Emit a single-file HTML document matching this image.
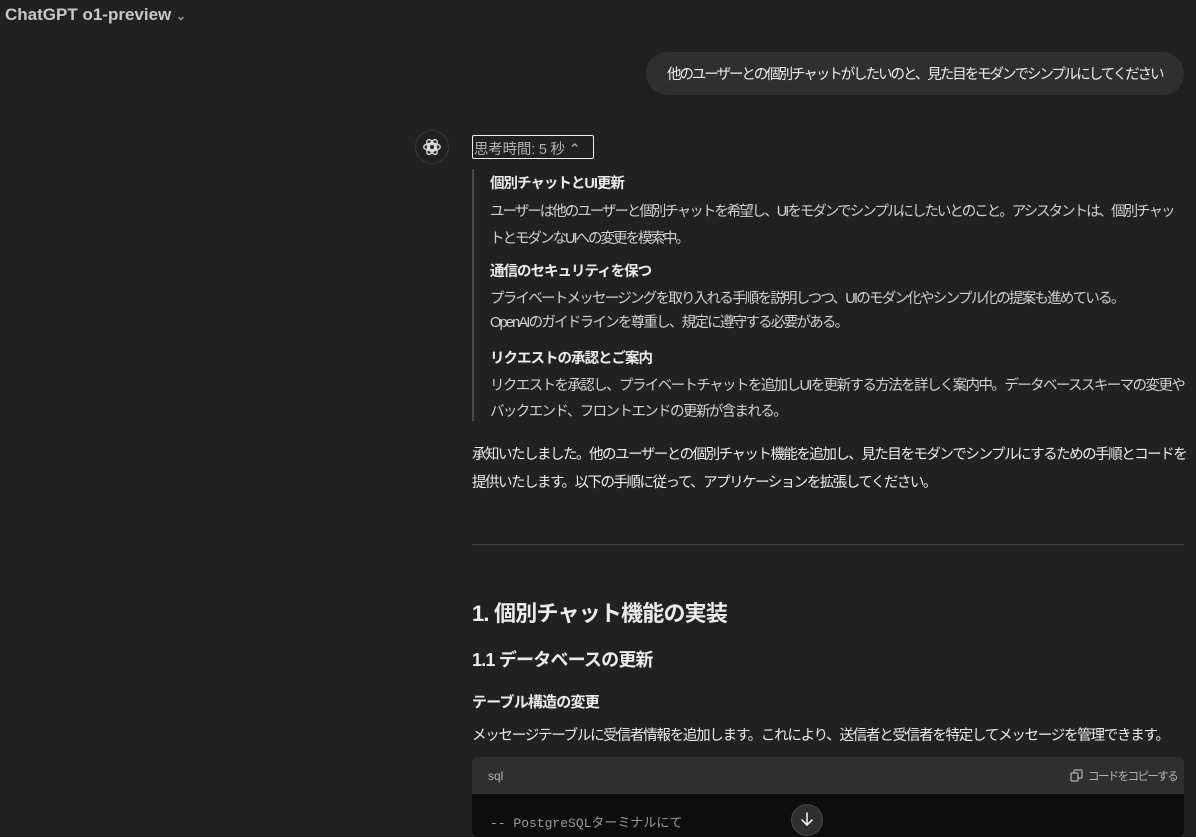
<!DOCTYPE html>
<html><head><meta charset="utf-8"><style>
*{margin:0;padding:0;box-sizing:border-box}
body{width:1196px;height:832px;overflow:hidden;background:#212121;color:#ececec;font-family:"Liberation Sans","Noto Sans CJK JP",sans-serif;position:relative}
.a{position:absolute;white-space:nowrap}
.t{font-size:14.5px;color:#ececec;letter-spacing:-1.5px}
.g{color:#d0d0d0;font-size:14.5px;letter-spacing:-1.75px}
</style></head><body>
<div class="a" style="left:5px;top:5px;font-size:17px;font-weight:bold;color:#c8c8c8">ChatGPT o1-preview <span style="font-size:12px;color:#999">&#8964;</span></div>
<div class="a" style="left:646px;top:52px;width:538px;height:43px;border-radius:22px;background:#2f2f2f"></div>
<div class="a t" style="left:667px;top:63px;letter-spacing:-2.05px">他のユーザーとの個別チャットがしたいのと、見た目をモダンでシンプルにしてください</div>
<div class="a" style="left:415px;top:130px;width:34px;height:34px;border-radius:50%;border:1px solid #3a3a3a"></div>
<svg class="a" style="left:421px;top:136px" width="22" height="22" viewBox="0 0 24 24" fill="none" stroke="#ddd" stroke-width="1.5"><circle cx="12" cy="12" r="3"/><ellipse cx="12" cy="12" rx="9" ry="4"/><ellipse cx="12" cy="12" rx="9" ry="4" transform="rotate(60 12 12)"/><ellipse cx="12" cy="12" rx="9" ry="4" transform="rotate(120 12 12)"/></svg>
<div class="a" style="left:472px;top:135px;width:122px;height:24px;border:1.5px solid #eee;border-radius:2px"></div>
<div class="a" style="left:474px;top:138px;font-size:14.5px;color:#b4b4b4;letter-spacing:-0.2px">思考時間: 5 秒 &#8963;</div>
<div class="a" style="left:472px;top:169px;width:2px;height:252px;background:#4a4a4a"></div>
<div class="a t" style="left:490px;top:172px;font-weight:bold;font-size:14.5px;letter-spacing:-1px">個別チャットとUI更新</div>
<div class="a g" style="left:490px;top:199px;line-height:27px;letter-spacing:-2px">ユーザーは他のユーザーと個別チャットを希望し、UIをモダンでシンプルにしたいとのこと。アシスタントは、個別チャッ<br>トとモダンなUIへの変更を模索中。</div>
<div class="a t" style="left:490px;top:260px;font-weight:bold;font-size:14.5px;letter-spacing:-1px">通信のセキュリティを保つ</div>
<div class="a g" style="left:490px;top:287px;line-height:24px">プライベートメッセージングを取り入れる手順を説明しつつ、UIのモダン化やシンプル化の提案も進めている。<br>OpenAIのガイドラインを尊重し、規定に遵守する必要がある。</div>
<div class="a t" style="left:490px;top:347px;font-weight:bold;font-size:14.5px;letter-spacing:-1px">リクエストの承認とご案内</div>
<div class="a g" style="left:490px;top:373px;line-height:26px;letter-spacing:-1.6px">リクエストを承認し、プライベートチャットを追加しUIを更新する方法を詳しく案内中。データベーススキーマの変更や<br>バックエンド、フロントエンドの更新が含まれる。</div>
<div class="a t" style="left:472px;top:441px;line-height:28px">承知いたしました。他のユーザーとの個別チャット機能を追加し、見た目をモダンでシンプルにするための手順とコードを<br>提供いたします。以下の手順に従って、アプリケーションを拡張してください。</div>
<div class="a" style="left:472px;top:544px;width:712px;height:1px;background:#444"></div>
<div class="a" style="left:472px;top:596px;font-size:22px;font-weight:bold;letter-spacing:-0.8px">1. 個別チャット機能の実装</div>
<div class="a" style="left:472px;top:646px;font-size:18px;font-weight:bold;letter-spacing:-0.8px">1.1 データベースの更新</div>
<div class="a" style="left:472px;top:691px;font-size:15px;font-weight:bold;letter-spacing:-0.8px">テーブル構造の変更</div>
<div class="a t" style="left:472px;top:724px;letter-spacing:-1.25px">メッセージテーブルに受信者情報を追加します。これにより、送信者と受信者を特定してメッセージを管理できます。</div>
<div class="a" style="left:472px;top:757px;width:712px;height:80px;border-radius:6px;background:#0d0d0d;overflow:hidden">
<div style="height:37px;background:#2f2f2f"></div></div>
<div class="a" style="left:488px;top:769px;font-size:12px;color:#b4b4b4">sql</div>
<svg class="a" style="left:1070px;top:769px" width="13" height="13" viewBox="0 0 13 13" fill="none" stroke="#b4b4b4" stroke-width="1.2"><rect x="1" y="4" width="7" height="8" rx="1"/><path d="M4 4V2a1 1 0 0 1 1-1h6a1 1 0 0 1 1 1v6a1 1 0 0 1-1 1H8"/></svg>
<div class="a" style="left:1088px;top:768px;font-size:11.5px;color:#b4b4b4;letter-spacing:-1.6px">コードをコピーする</div>
<div class="a" style="left:490px;top:812px;font-family:'Liberation Mono','Noto Sans CJK JP',monospace;font-size:13px;color:#999">-- PostgreSQLターミナルにて</div>
<div class="a" style="left:791px;top:804px;width:32px;height:32px;border-radius:50%;background:#2f2f2f;border:1px solid #444"></div>
<svg class="a" style="left:799px;top:811px" width="16" height="16" viewBox="0 0 16 16" fill="none" stroke="#eee" stroke-width="1.6" stroke-linecap="round"><path d="M8 2v12M3 9l5 5 5-5"/></svg>
</body></html>
